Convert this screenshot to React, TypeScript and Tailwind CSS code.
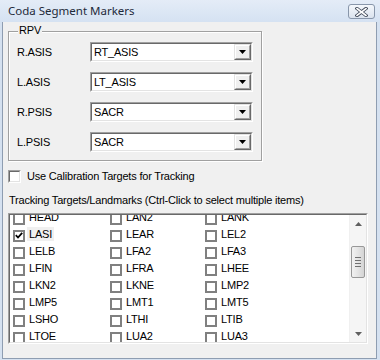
import type { ReactNode } from 'react';

const combos = [
  { label: 'R.ASIS', value: 'RT_ASIS' },
  { label: 'L.ASIS', value: 'LT_ASIS' },
  { label: 'R.PSIS', value: 'SACR' },
  { label: 'L.PSIS', value: 'SACR' },
];

const targets = [
  'HEAD', 'LAN2', 'LANK',
  'LASI', 'LEAR', 'LEL2',
  'LELB', 'LFA2', 'LFA3',
  'LFIN', 'LFRA', 'LHEE',
  'LKN2', 'LKNE', 'LMP2',
  'LMP5', 'LMT1', 'LMT5',
  'LSHO', 'LTHI', 'LTIB',
  'LTOE', 'LUA2', 'LUA3',
];

function Sunken({ className, children }: { className?: string; children?: ReactNode }) {
  return (
    <div className={`border border-t-[#a0a0a0] border-l-[#a0a0a0] border-r-white border-b-white ${className ?? ''}`}>
      <div className="h-full w-full border border-t-[#696969] border-l-[#696969] border-r-[#e3e3e3] border-b-[#e3e3e3]">
        {children}
      </div>
    </div>
  );
}

function Combo({ value }: { value: string }) {
  return (
    <Sunken className="h-[20px] w-[163px]">
      <div className="flex h-full bg-white">
        <span className="flex-1 pl-[2px] leading-[16px] text-black">{value}</span>
        <div className="w-[17px] border border-t-[#e3e3e3] border-l-[#e3e3e3] border-r-[#696969] border-b-[#696969]">
          <div className="flex h-full items-center justify-center border border-t-white border-l-white border-r-[#a0a0a0] border-b-[#a0a0a0] bg-[#f0f0f0]">
            <svg width="7" height="4" viewBox="0 0 7 4">
              <path d="M0 0h7L3.5 4z" fill="#000" />
            </svg>
          </div>
        </div>
      </div>
    </Sunken>
  );
}

function ListCheck({ checked }: { checked?: boolean }) {
  return (
    <div className="mt-[4px] flex h-[12px] w-[12px] shrink-0 items-center justify-center border-2 border-[#808080] bg-white">
      {checked && (
        <svg width="8" height="7" viewBox="0 0 8 7">
          <path d="M0.8 3.2 L3 5.5 L7.2 0.8" stroke="#000" strokeWidth="1.8" fill="none" />
        </svg>
      )}
    </div>
  );
}

export default function App() {
  return (
    <div
      className="flex h-[360px] w-[380px] flex-col bg-[#d5e1f0] text-[11px] tracking-[-0.2px] text-black"
      style={{ fontFamily: '"Liberation Sans", Arial, sans-serif' }}
    >
      {/* title bar */}
      <div className="relative flex h-[22px] shrink-0 items-center bg-gradient-to-b from-[#e4ecf7] to-[#d5e2f2] pl-[8px]">
        <span
          className="text-[11.5px] tracking-normal text-[#1e2a3a]"
          style={{ fontFamily: '"Noto Sans", "Open Sans", sans-serif' }}
        >
          Coda Segment Markers
        </span>
        <button
          type="button"
          className="absolute right-[5px] top-[4px] flex h-[15px] w-[27px] items-center justify-center rounded-[3px] border border-[#8896aa] bg-gradient-to-b from-[#f4f7fb] to-[#dbe3ee]"
        >
          <svg width="13" height="10" viewBox="0 0 13 10">
            <path d="M2 1.5 L11 8.5 M11 1.5 L2 8.5" stroke="#3d4656" strokeWidth="3.4" strokeLinecap="square" />
            <path d="M2 1.5 L11 8.5 M11 1.5 L2 8.5" stroke="#fff" strokeWidth="1.6" strokeLinecap="square" />
          </svg>
        </button>
      </div>

      {/* client area */}
      <div className="ml-[2px] mr-[3px] mb-[1px] flex flex-1 flex-col border border-t-0 border-[#8e9db1] bg-[#f0f0f0] pl-[5px]">
        {/* RPV group */}
        <div className="relative mt-[9px] h-[130px] w-[254px] border border-[#a0a0a0] shadow-[1px_1px_0_#fff,inset_1px_1px_0_#fff]">
          <span className="absolute left-[9px] top-[-8px] bg-[#f0f0f0] px-[1px] leading-[13px]">RPV</span>
          <div className="flex flex-col gap-[10px] pl-[8px] pt-[10px]">
            {combos.map((c) => (
              <div key={c.label} className="flex h-[20px] items-center">
                <span className="w-[73px]">{c.label}</span>
                <Combo value={c.value} />
              </div>
            ))}
          </div>
        </div>

        {/* calibration checkbox */}
        <div className="mt-[9px] flex items-center gap-[6px]">
          <Sunken className="h-[13px] w-[13px]">
            <div className="h-full w-full bg-white" />
          </Sunken>
          <span className="leading-[13px]">Use Calibration Targets for Tracking</span>
        </div>

        <div className="ml-[1px] mt-[11px] leading-[13px]">
          Tracking Targets/Landmarks (Ctrl-Click to select multiple items)
        </div>

        {/* targets list */}
        <Sunken className="mt-[6px] h-[131px] w-[360px]">
          <div className="flex h-full bg-white">
            <div className="flex-1 overflow-hidden">
              <div className="mt-[-7px] grid grid-cols-[97px_95px_1fr] pl-[3px]">
                {targets.map((t) => (
                  <div key={t} className="flex h-[17px] items-center gap-[2px]">
                    <ListCheck checked={t === 'LASI'} />
                    <span
                      className={`h-[14px] px-[2px] leading-[14px] ${t === 'LASI' ? 'bg-[#f0f0f0]' : ''}`}
                    >
                      {t}
                    </span>
                  </div>
                ))}
              </div>
            </div>
            {/* scrollbar */}
            <div className="flex w-[17px] flex-col items-center border-l border-[#f0f0f0] bg-[#f5f5f5]">
              <div className="flex h-[17px] items-center justify-center">
                <svg width="7" height="4" viewBox="0 0 7 4">
                  <path d="M3.5 0L7 4H0z" fill="#606060" />
                </svg>
              </div>
              <div className="mt-[14px] flex h-[32px] w-[14px] flex-col items-center justify-center gap-[2px] rounded-[2px] border border-[#989898] bg-gradient-to-r from-[#f2f2f2] via-[#e4e4e4] to-[#d4d4d4]">
                <div className="h-[1px] w-[6px] bg-[#707070]" />
                <div className="h-[1px] w-[6px] bg-[#707070]" />
                <div className="h-[1px] w-[6px] bg-[#707070]" />
                <div className="h-[1px] w-[6px] bg-[#707070]" />
              </div>
              <div className="flex-1" />
              <div className="flex h-[17px] items-center justify-center">
                <svg width="7" height="4" viewBox="0 0 7 4">
                  <path d="M0 0h7L3.5 4z" fill="#606060" />
                </svg>
              </div>
            </div>
          </div>
        </Sunken>
      </div>
    </div>
  );
}
